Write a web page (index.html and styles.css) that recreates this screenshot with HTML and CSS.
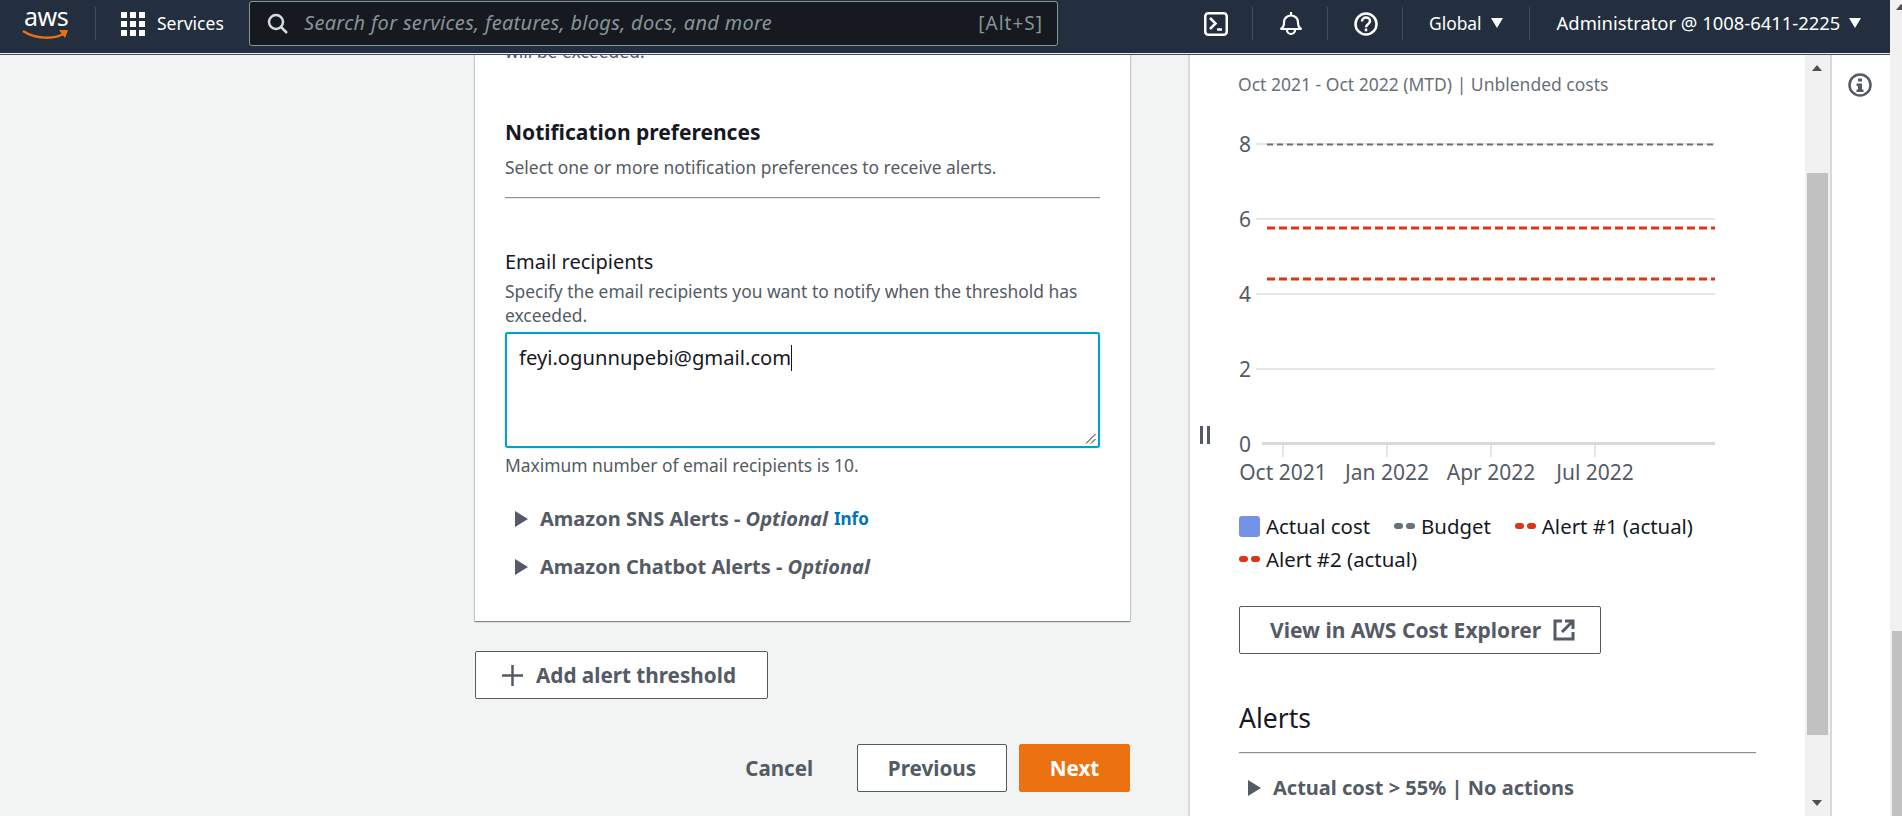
FILE: index.html
```html
<!DOCTYPE html>
<html lang="en">
<head>
    <meta charset="UTF-8"/>
    <title>AWS Budgets</title>
    <link rel="stylesheet" href="styles.css">
</head>
<body>
<div class="window">
    <header class="topbar">
        <div class="logo">
            <span class="logo-text">aws</span>
            <svg class="logo-smile" width="47" height="11" viewBox="0 0 47 11"><path d="M1 2c12 8 31 9 42 2" fill="none" stroke="#ec7211" stroke-width="2.4"/><path d="M37 1l9 0-3 8z" fill="#ec7211"/></svg>
        </div>
        <span class="sep"></span>
        <div class="services">
            <svg width="24" height="24" viewBox="0 0 24 24" fill="#fff"><rect x="0" y="0" width="6" height="6"/><rect x="9" y="0" width="6" height="6"/><rect x="18" y="0" width="6" height="6"/><rect x="0" y="9" width="6" height="6"/><rect x="9" y="9" width="6" height="6"/><rect x="18" y="9" width="6" height="6"/><rect x="0" y="18" width="6" height="6"/><rect x="9" y="18" width="6" height="6"/><rect x="18" y="18" width="6" height="6"/></svg>
            <span>Services</span>
        </div>
        <div class="search">
            <svg width="21" height="21" viewBox="0 0 21 21" fill="none" stroke="#d5dbdb" stroke-width="2.500"><circle cx="9" cy="9" r="7"/><path d="M14 14l6 6"/></svg>
            <span class="search-text">Search for services, features, blogs, docs, and more</span>
            <span class="search-key">[Alt+S]</span>
        </div>
        <div class="top-icons">
            <span class="top-icon"><svg width="24" height="24" viewBox="0 0 24 24" fill="none" stroke="#fff" stroke-width="2.500"><rect x="1.250" y="1.250" width="21.500" height="21.500" rx="3"/><path d="M6 6l5.500 5.500L6 17M13 17.500h5"/></svg></span>
            <span class="sep"></span>
            <span class="top-icon"><svg width="24" height="24" viewBox="0 0 24 24" fill="none" stroke="#fff" stroke-width="2.200"><path d="M12 0v4M1.500 17c2-1 3.500-3 3.500-6v-1a7 6.500 0 0 1 14 0v1c0 3 1.500 5 3.500 6z"/><path d="M8 18a4 4 0 0 0 8 0"/></svg></span>
            <span class="sep"></span>
            <span class="top-icon"><svg width="24" height="24" viewBox="0 0 24 24" fill="none" stroke="#fff" stroke-width="2.500"><circle cx="12" cy="12" r="10.500"/><path d="M8 9.500C8 7 9.800 5.500 12 5.500s4 1.500 4 3.700c0 3-4 3-4 6"/><path d="M12 16.500v2.800"/></svg></span>
            <span class="sep"></span>
            <span class="menu global">Global<i class="caret"></i></span>
            <span class="sep"></span>
            <span class="menu account">Administrator @ 1008-6411-2225<i class="caret"></i></span>
        </div>
    </header>

    <div class="page">
        <main class="form-col">
            <section class="card">
                <p class="clipped">will be exceeded.</p>
                <h3>Notification preferences</h3>
                <p class="hint">Select one or more notification preferences to receive alerts.</p>
                <div class="rule"></div>
                <label for="emails">Email recipients</label>
                <p class="hint">Specify the email recipients you want to notify when the threshold has exceeded.</p>
                <div class="textbox" id="emails">feyi.ogunnupebi@gmail.com<span class="cursor"></span>
                    <svg class="grip" width="11" height="11" viewBox="0 0 11 11" stroke="#222" fill="none"><path d="M1 10.500L10.500 1M6 10.500L10.500 6"/></svg>
                </div>
                <p class="hint constraint">Maximum number of email recipients is 10.</p>
                <div class="expander first"><i class="arrow"></i><span>Amazon SNS Alerts - <em>Optional</em></span> <a class="info">Info</a></div>
                <div class="expander"><i class="arrow"></i><span>Amazon Chatbot Alerts - <em>Optional</em></span></div>
            </section>
            <button class="btn add"><svg width="21" height="21" viewBox="0 0 21 21" stroke="#545b64" stroke-width="2.500"><path d="M10.500 0v21M0 10.500h21"/></svg>Add alert threshold</button>
            <div class="actions">
                <a class="cancel">Cancel</a>
                <button class="btn prev">Previous</button>
                <button class="btn next">Next</button>
            </div>
        </main>

        <aside class="side">
            <div class="side-body">
                <p class="range">Oct 2021 - Oct 2022 (MTD) | Unblended costs</p>
                <svg class="chart" width="520" height="358" viewBox="0 0 520 358">
                    <g class="grid">
                        <path d="M17 14H476M17 89H476M17 164H476M17 239H476"/>
                        <path class="axis" d="M23 313.500H476"/>
                        <path class="ticks" d="M44 315V327M148 315V327M252 315V327M356 315V327"/>
                    </g>
                    <path class="budget" d="M28 14.500H476"/>
                    <path class="alert" d="M28 98H476M28 149H476"/>
                    <g class="ylabels">
                        <text x="0" y="22">8</text>
                        <text x="0" y="97">6</text>
                        <text x="0" y="172">4</text>
                        <text x="0" y="247">2</text>
                        <text x="0" y="322">0</text>
                    </g>
                    <g class="xlabels">
                        <text x="44" y="350">Oct 2021</text>
                        <text x="148" y="350">Jan 2022</text>
                        <text x="252" y="350">Apr 2022</text>
                        <text x="356" y="350">Jul 2022</text>
                    </g>
                </svg>
                <div class="legend">
                    <span class="legend-item"><i class="swatch"></i>Actual cost</span>
                    <span class="legend-item"><i class="dots grey"></i>Budget</span>
                    <span class="legend-item"><i class="dots red"></i>Alert #1 (actual)</span>
                    <span class="legend-item"><i class="dots red"></i>Alert #2 (actual)</span>
                </div>
                <button class="btn explorer">View in AWS Cost Explorer
                    <svg width="22" height="22" viewBox="0 0 22 22" fill="none" stroke="#545b64" stroke-width="3"><path d="M9 2H2v18h18v-7M12 2h8v8M20 2L9 13"/></svg>
                </button>
                <h2>Alerts</h2>
                <div class="rule"></div>
                <div class="expander alert-row"><i class="arrow"></i><span>Actual cost &gt; 55% | No actions</span></div>
            </div>
            <div class="pause"></div>
            <div class="scrollbar">
                <i class="up"></i>
                <div class="thumb"></div>
                <i class="down"></i>
            </div>
        </aside>

        <div class="info-rail">
            <svg width="24" height="24" viewBox="0 0 24 24"><circle cx="12" cy="12" r="10.500" fill="none" stroke="#545b64" stroke-width="2.500"/><path d="M10 5.500h4v3h-4zM8.500 10.500h5.500v6h1.500v2.500h-7v-2.500H10v-3.500H8.500z" fill="#545b64"/></svg>
        </div>
    </div>

    <div class="outer-scroll">
        <i class="outer-up"></i>
        <div class="outer-thumb"></div>
    </div>
</div>
</body>
</html>
```

FILE: styles.css
```css
* {
    box-sizing: border-box;
}
html, body {
    margin: 0;
    padding: 0;
    height: 100%;
    overflow: hidden;
}
body {
    font-family: "Noto Sans", sans-serif;
    color: #16191f;
    background: #f2f3f3;
}
.window {
    position: relative;
    height: 816px;
    padding-right: 12px;
}
.topbar {
    position: relative;
    z-index: 2;
    display: flex;
    align-items: center;
    height: 55px;
    padding: 1px 0 8px 22px;
    background: #232f3e;
    border-bottom: 1px solid #414d5c;
    box-shadow: inset 0 -1px 0 #eaeded;
    color: #fff;
}
.logo {
    position: relative;
    width: 47px;
    height: 40px;
}
.logo-text {
    display: block;
    padding-left: 2px;
    font-size: 25px;
    line-height: 25px;
    letter-spacing: -.5px;
}
.logo-smile {
    position: absolute;
    left: 0;
    top: 25px;
}
.sep {
    flex: none;
    width: 1px;
    height: 33px;
    background: #414d5c;
}
.topbar > .sep {
    margin-left: 26px;
    margin-right: 25px;
}
.services {
    display: flex;
    align-items: center;
    gap: 12px;
    width: 128px;
    font-size: 17.5px;
}
.services span, .search-text, .search-key, .menu {
    padding-bottom: 2px;
}
.search {
    flex: none;
    display: flex;
    align-items: center;
    width: 809px;
    height: 45px;
    padding: 0 14px 0 17px;
    background: #16191f;
    border: 1px solid #879596;
    border-radius: 3px;
    color: #879596;
}
.search-text {
    flex: 1;
    margin-left: 16px;
    font-size: 20px;
    font-style: italic;
    letter-spacing: .3px;
}
.search-key {
    font-size: 19px;
    letter-spacing: 1px;
}
.top-icons {
    display: flex;
    align-items: center;
    margin-left: 120px;
}
.top-icon {
    display: flex;
    justify-content: center;
    width: 74px;
    padding-left: 2px;
}
.menu {
    display: flex;
    align-items: center;
    gap: 9px;
    white-space: nowrap;
}
.global {
    padding: 0 26px 2px 26px;
    font-size: 17.4px;
}
.account {
    padding-left: 27px;
    font-size: 18.4px;
}
.caret {
    border-left: 6px solid transparent;
    border-right: 6px solid transparent;
    border-top: 10px solid #fff;
}

.page {
    display: flex;
    height: 761px;
    overflow: hidden;
}
.form-col {
    flex: none;
    width: 655px;
    margin-left: 475px;
}
.card {
    height: 582px;
    padding: 0 30px;
    background: #fff;
    box-shadow: 0 1px 1px 0 rgba(0,28,36,.3), 1px 1px 1px 0 rgba(0,28,36,.15), -1px 1px 1px 0 rgba(0,28,36,.15);
}
.clipped {
    margin: -16px 0 0 0;
    font-size: 17.5px;
    line-height: 24px;
    color: #545b64;
}
h3 {
    margin: 55px 0 0 0;
    font-size: 21px;
    line-height: 28px;
    font-weight: 700;
}
.hint {
    margin: 0;
    font-size: 17.4px;
    line-height: 24px;
    color: #545b64;
}
h3 + .hint {
    margin-top: 9px;
}
.rule {
    height: 2px;
    margin-top: 18px;
    background: #8a8f94;
    border-bottom: 1px solid #eaeded;
}
label {
    display: block;
    margin: 49px 0 3px 0;
    font-size: 20px;
    line-height: 28px;
}
.textbox {
    position: relative;
    height: 116px;
    margin-top: 5px;
    padding: 9px 12px;
    font-size: 20.2px;
    line-height: 28px;
    border: 2px solid #00a1c9;
    border-radius: 3px;
    box-shadow: 0 0 1px #00a1c9;
}
.cursor {
    display: inline-block;
    width: 1px;
    height: 26px;
    background: #16191f;
    vertical-align: -6px;
}
.grip {
    position: absolute;
    right: 2px;
    bottom: 2px;
}
.constraint {
    margin-top: 5px;
}
.expander {
    display: flex;
    align-items: center;
    margin-top: 20px;
    padding-left: 10px;
    font-size: 20px;
    line-height: 28px;
    font-weight: 700;
    color: #545b64;
}
.expander.first {
    margin-top: 28px;
}
.arrow {
    flex: none;
    margin-right: 12px;
    border-top: 8px solid transparent;
    border-bottom: 8px solid transparent;
    border-left: 13px solid #545b64;
}
.info {
    margin-left: 6px;
    font-size: 17px;
    color: #0073bb;
}
.btn {
    font-family: inherit;
    font-weight: 700;
    font-size: 20.7px;
    background: #fff;
    color: #545b64;
    border: 1px solid #545b64;
    border-radius: 2px;
    height: 48px;
    white-space: nowrap;
}
.add {
    display: flex;
    align-items: center;
    gap: 13px;
    width: 293px;
    margin-top: 30px;
    padding: 0 0 0 26px;
}
.actions {
    display: flex;
    align-items: center;
    justify-content: flex-end;
    margin-top: 45px;
}
.cancel {
    margin-right: 44px;
    font-weight: 700;
    font-size: 20.5px;
    color: #545b64;
}
.prev {
    width: 150px;
    margin-right: 12px;
    padding: 0;
}
.next {
    width: 111px;
    padding: 0;
    color: #fff;
    background: #ec7211;
    border-color: #ec7211;
}

.side {
    position: relative;
    flex: none;
    display: flex;
    width: 641px;
    margin-left: 59px;
    background: #fff;
    border-left: 1px solid #d5dbdb;
    box-shadow: -1px 0 1px rgba(0,28,36,.1);
}
.side-body {
    flex: 1;
    padding: 17px 0 0 49px;
}
.range {
    margin: 0 0 0 -1px;
    font-size: 17.5px;
    line-height: 24px;
    color: #687078;
}
.chart {
    display: block;
    margin-top: 34px;
    overflow: visible;
}
.grid path {
    fill: none;
    stroke: #e1e6e6;
    stroke-width: 2;
}
.grid .axis {
    stroke-width: 3;
    stroke: #d5dbdb;
}
.budget {
    stroke: #687078;
    stroke-width: 2;
    stroke-dasharray: 6 4;
}
.alert {
    stroke: #df3312;
    stroke-width: 3;
    stroke-dasharray: 8 4;
}
.chart text {
    font-family: "Noto Sans", sans-serif;
    font-size: 21px;
    fill: #545b64;
}
.xlabels text {
    text-anchor: middle;
}
.legend {
    display: flex;
    flex-wrap: wrap;
    width: 500px;
    gap: 5px 24px;
    margin-top: 24px;
    font-size: 20.4px;
    line-height: 28px;
    color: #16191f;
}
.legend-item {
    display: flex;
    align-items: center;
    gap: 6px;
}
.swatch {
    width: 21px;
    height: 21px;
    background: #7492e7;
    border-radius: 3px;
}
.dots {
    display: flex;
    gap: 3px;
}
.dots::before, .dots::after {
    content: "";
    width: 9px;
    height: 6px;
    border-radius: 3px;
    background: currentColor;
}
.dots.grey {
    color: #687078;
}
.dots.red {
    color: #df3312;
}
.explorer {
    display: flex;
    align-items: center;
    justify-content: space-between;
    width: 362px;
    margin-top: 33px;
    padding: 0 25px 0 30px;
    font-size: 21px;
}
h2 {
    margin: 47px 0 0 0;
    font-size: 26.5px;
    line-height: 34px;
    font-weight: 400;
}
.side-body .rule {
    width: 517px;
    margin-top: 17px;
}
.alert-row {
    margin-top: 20px;
    padding-left: 9px;
}
.pause {
    position: absolute;
    left: 10px;
    top: 371px;
    width: 10px;
    height: 18px;
    border-left: 3px solid #545b64;
    border-right: 3px solid #545b64;
}
.scrollbar {
    position: relative;
    flex: none;
    width: 25px;
    background: #f1f1f1;
}
.thumb {
    position: absolute;
    left: 2px;
    right: 2px;
    top: 118px;
    height: 562px;
    background: #c1c1c1;
}
.up, .down {
    position: absolute;
    left: 7px;
    border-left: 5.5px solid transparent;
    border-right: 5.5px solid transparent;
}
.up {
    top: 10px;
    border-bottom: 6px solid #505050;
}
.down {
    bottom: 10px;
    border-top: 6px solid #505050;
}
.info-rail {
    flex: 1;
    display: flex;
    justify-content: center;
    align-items: flex-start;
    padding: 18px 3px 0 0;
    background: #fff;
    border-left: 2px solid #d5dbdb;
}
.outer-scroll {
    position: absolute;
    right: 0;
    top: 0;
    bottom: 0;
    width: 12px;
    overflow: hidden;
    background: #f1f1f1;
}
.outer-up {
    position: absolute;
    left: 6px;
    top: 4px;
    border-left: 5.5px solid transparent;
    border-right: 5.5px solid transparent;
    border-bottom: 6px solid #505050;
}
.outer-thumb {
    position: absolute;
    left: 2px;
    right: 0;
    top: 631px;
    bottom: 0;
    background: #c1c1c1;
}
```
